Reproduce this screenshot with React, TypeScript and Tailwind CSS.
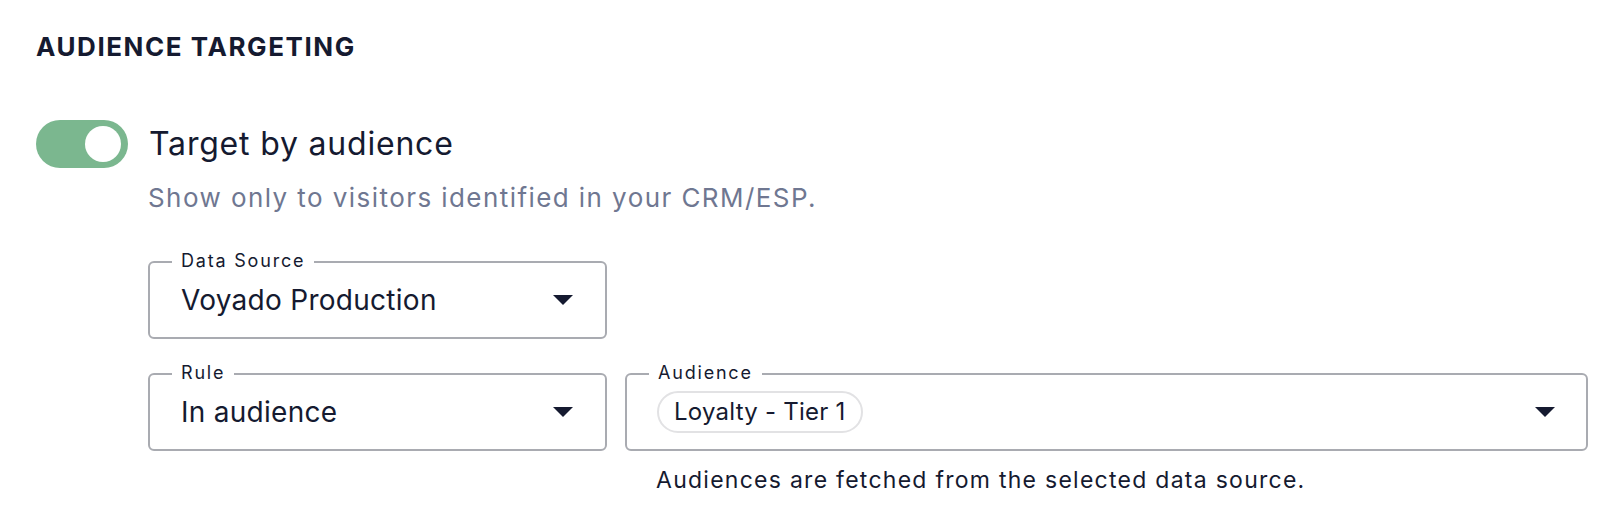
import React from 'react';

function Caret() {
  return (
    <svg width="20" height="10" viewBox="0 0 20 10" className="shrink-0">
      <path d="M0 0 L20 0 L10 10 Z" fill="#151a30" />
    </svg>
  );
}

interface SelectBoxProps {
  label: string;
  className?: string;
  children: React.ReactNode;
}

function SelectBox({ label, className = '', children }: SelectBoxProps) {
  return (
    <div className={`relative h-[78px] rounded-[6px] border-2 border-[#a9abb1] flex items-center justify-between ${className}`}>
      <span className="absolute left-[22px] top-[-13px] bg-white px-[9px] text-[18px] leading-[22px] tracking-[0.1em] text-[#151a30]">
        {label}
      </span>
      {children}
      <Caret />
    </div>
  );
}

export default function App() {
  return (
    <div className="w-full h-[532px] bg-white pl-[36px] pt-[31px] font-['Inter',sans-serif] text-[#151a30]">
      <h2 className="text-[26px] leading-[32px] font-bold tracking-[0.06em]">AUDIENCE TARGETING</h2>

      <div className="mt-[57px] flex items-center gap-[21px]">
        <button
          type="button"
          className="w-[92px] h-[48px] rounded-full bg-[#7bb78f] flex items-center justify-end pr-[7px]"
        >
          <span className="w-[36px] h-[36px] rounded-full bg-white" />
        </button>
        <span className="text-[32px] leading-[40px] tracking-[0.025em]">Target by audience</span>
      </div>

      <div className="ml-[112px]">
        <p className="mt-[14px] text-[26px] leading-[32px] text-[#6f7791] tracking-[0.055em]">
          Show only to visitors identified in your CRM/ESP.
        </p>

        <SelectBox label="Data Source" className="mt-[47px] w-[459px] pl-[31px] pr-[32px]">
          <span className="text-[28px] leading-[36px] tracking-[0.01em]">Voyado Production</span>
        </SelectBox>

        <div className="mt-[34px] flex gap-[18px]">
          <SelectBox label="Rule" className="w-[459px] pl-[31px] pr-[32px]">
            <span className="text-[28px] leading-[36px] tracking-[0.01em]">In audience</span>
          </SelectBox>
          <div className="w-[963px]">
            <SelectBox label="Audience" className="pl-[30px] pr-[31px]">
              <span className="h-[42px] rounded-full border-2 border-[#e2e2e4] px-[15px] flex items-center text-[24px] leading-[32px] tracking-[0.01em]">
                Loyalty - Tier 1
              </span>
            </SelectBox>
            <p className="mt-[14px] ml-[31px] text-[23px] leading-[30px] tracking-[0.055em]">
              Audiences are fetched from the selected data source.
            </p>
          </div>
        </div>
      </div>
    </div>
  );
}
